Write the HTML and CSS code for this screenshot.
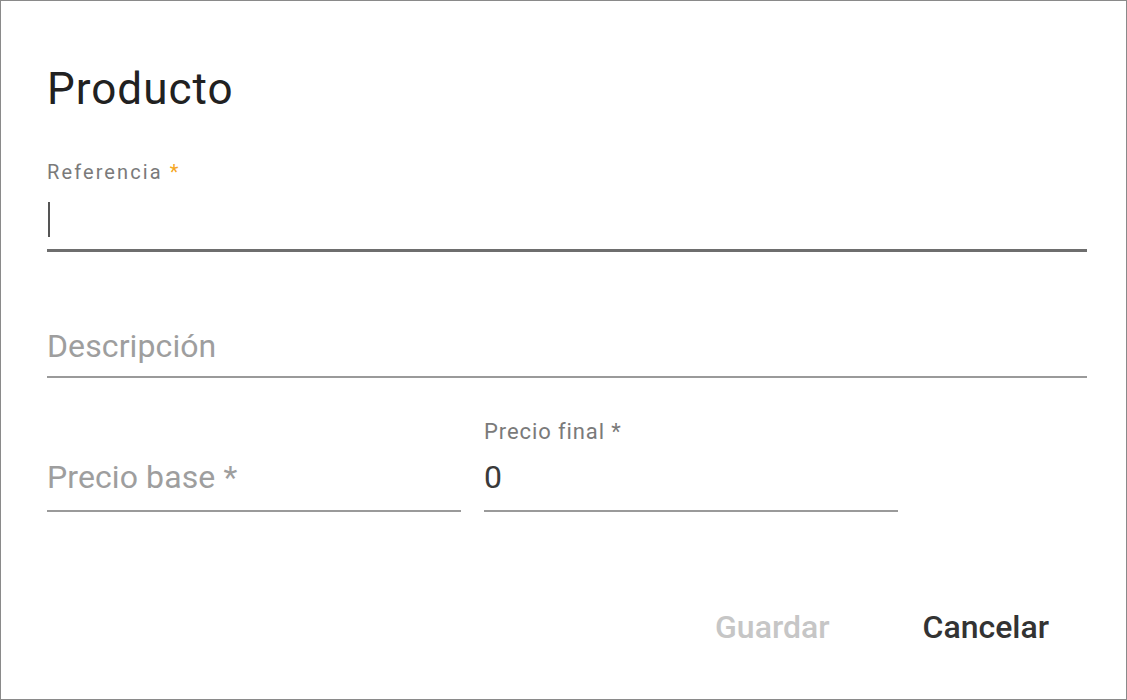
FILE: index.html
```html
<!DOCTYPE html>
<html lang="es">
<head>
<meta charset="utf-8">
<title>Producto</title>
<link rel="stylesheet" href="styles.css">
</head>
<body>
<div class="dialog">
  <h1 class="title">Producto</h1>
  <div class="field field-ref">
    <div class="label label-sm">Referencia <span class="req">*</span></div>
    <div class="input focused"><span class="caret"></span></div>
  </div>
  <div class="field field-desc">
    <div class="label"></div>
    <div class="input"><span class="placeholder">Descripción</span></div>
  </div>
  <div class="row">
    <div class="field half">
      <div class="label"></div>
      <div class="input input-low"><span class="placeholder">Precio base *</span></div>
    </div>
    <div class="field half">
      <div class="label label-md">Precio final *</div>
      <div class="input input-low"><span class="value">0</span></div>
    </div>
  </div>
  <div class="actions">
    <button class="btn btn-disabled" disabled>Guardar</button>
    <button class="btn">Cancelar</button>
  </div>
</div>
</body>
</html>
```

FILE: styles.css
```css
html, body {
  margin: 0;
  padding: 0;
  background: #ffffff;
}

body {
  font-family: Roboto, "Liberation Sans", sans-serif;
}

.dialog {
  box-sizing: border-box;
  width: 1127px;
  height: 700px;
  border: 1px solid #8a8a8a;
  padding: 63px 39px 0 46px;
  display: flex;
  flex-direction: column;
}

.title {
  margin: 0;
  font-size: 44px;
  line-height: 50px;
  font-weight: 400;
  letter-spacing: 1px;
  color: #212121;
}

.field {
  display: flex;
  flex-direction: column;
}

.field-ref {
  margin-top: 47px;
}

.field-desc {
  margin-top: 36px;
}

.label {
  height: 22px;
  font-size: 20px;
  line-height: 22px;
  color: #7a7a7a;
  white-space: nowrap;
}

.label-sm {
  letter-spacing: 2.1px;
}

.label-md {
  font-size: 22px;
  letter-spacing: 0.9px;
}

.req {
  color: #f5a623;
}

.input {
  margin-top: 18px;
  height: 36px;
  padding-bottom: 12px;
  border-bottom: 2px solid #9a9a9a;
  font-size: 32px;
  line-height: 36px;
  letter-spacing: 0.1px;
  display: flex;
  align-items: center;
}

.input-low {
  margin-top: 16px;
  padding-bottom: 15px;
}

.input.focused {
  border-bottom: 3px solid #6e6e6e;
}

.caret {
  display: block;
  width: 2px;
  height: 35px;
  margin-left: 1px;
  background: #555555;
}

.placeholder {
  color: #9e9e9e;
}

.value {
  color: #3a3a3a;
}

.row {
  display: flex;
  gap: 23px;
  margin-top: 43px;
}

.half {
  width: 414px;
}

.actions {
  display: flex;
  justify-content: flex-end;
  gap: 17px;
  margin-top: 95px;
}

.btn {
  font-family: Roboto, "Liberation Sans", sans-serif;
  font-size: 32px;
  font-weight: 500;
  line-height: 40px;
  background: none;
  border: none;
  padding: 0 38px;
  color: #333333;
  cursor: pointer;
}

.btn-disabled {
  color: #c6c6c6;
  cursor: default;
}
```
